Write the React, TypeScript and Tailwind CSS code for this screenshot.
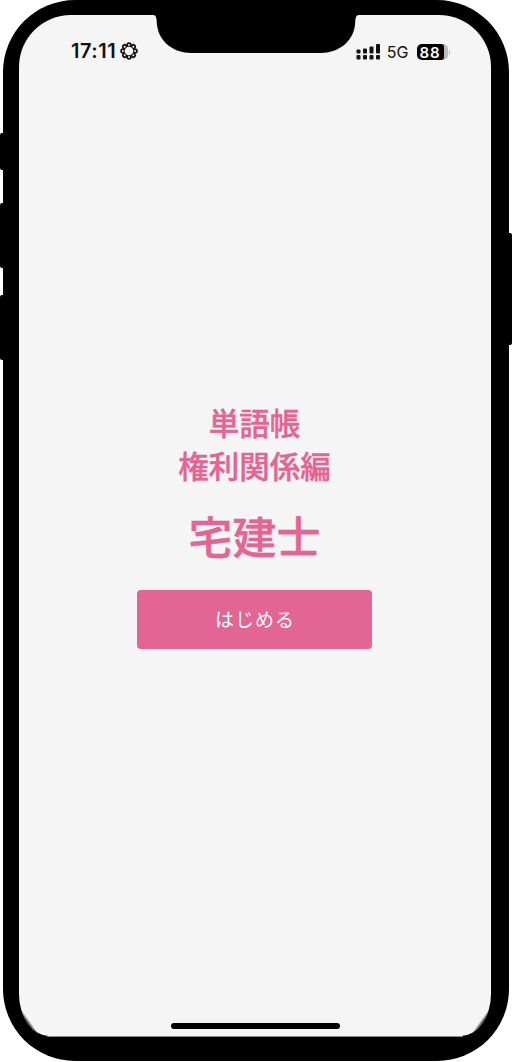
const pink = 'text-[#e26593]';
const heavy = '[-webkit-text-stroke:0.45px_#e26593]';

function RosetteIcon() {
  const angles = [0, 45, 90, 135, 180, 225, 270, 315];
  return (
    <svg width="18" height="18" viewBox="0 0 18 18" className="ml-[4px]">
      {angles.map((a) => (
        <circle key={a} cx="9" cy="2.900" r="2.700" fill="#111" transform={`rotate(${a} 9 9)`} />
      ))}
      {angles.map((a) => (
        <circle key={a} cx="9" cy="2.900" r="1" fill="#f5f5f5" transform={`rotate(${a} 9 9)`} />
      ))}
      <circle cx="9" cy="9" r="4.300" fill="#f5f5f5" />
    </svg>
  );
}

function SignalIcon() {
  return (
    <svg width="24" height="16" viewBox="0 0 24 16" fill="#111">
      <rect x="0.500" y="5.500" width="4" height="4" rx="1" />
      <rect x="0.500" y="11" width="4" height="4.500" rx="1" />
      <rect x="7" y="4.500" width="4" height="5" rx="1" />
      <rect x="7" y="11" width="4" height="4.500" rx="1" />
      <rect x="13.500" y="2.500" width="4" height="7" rx="1" />
      <rect x="13.500" y="11" width="4" height="4.500" rx="1" />
      <rect x="20" y="0" width="4" height="9.500" rx="1" />
      <rect x="20" y="11" width="4" height="4.500" rx="1" />
    </svg>
  );
}

function Battery() {
  return (
    <div className="ml-[8px] flex items-center">
      <div className="flex h-[16px] w-[31px] items-center overflow-hidden rounded-[5px] bg-[#bbb]">
        <div className="flex h-full w-[27px] items-center justify-center rounded-r-[3px] bg-black text-[15px] leading-none font-semibold tracking-[0.8px] text-white">
          88
        </div>
      </div>
      <div className="ml-[1px] h-[5px] w-[1.500px] rounded-r bg-[#bbb]" />
    </div>
  );
}

function Notch() {
  return (
    <svg
      width="220"
      height="54"
      viewBox="0 0 220 54"
      className="absolute top-0 left-[146px]"
    >
      <path d="M0 0H220V15H213C209 15 209.500 20 209 25C207 42 192 53 175 53H45C28 53 13 42 11 25C10.500 20 11 15 7 15H0Z" fill="#000" />
    </svg>
  );
}

export default function App() {
  return (
    <div className="relative h-[1062px] w-[512px] overflow-hidden bg-white font-['Noto_Sans_CJK_JP',sans-serif]">
      {/* side buttons */}
      <div className="absolute top-[133px] left-0 h-[37px] w-[4px] rounded-l-[2px] bg-black" />
      <div className="absolute top-[203px] left-0 h-[65px] w-[4px] rounded-l-[2px] bg-black" />
      <div className="absolute top-[295px] left-0 h-[65px] w-[4px] rounded-l-[2px] bg-black" />
      <div className="absolute top-[233px] right-0 h-[112px] w-[4px] rounded-r-[2px] bg-black" />

      <div className="mx-[3px] h-[1061px] rounded-[72px] bg-black pt-[15px] pr-[18px] pb-[25px] pl-[16px]">
        <div className="relative flex h-full flex-col rounded-t-[52px] rounded-bl-[30px_42px] rounded-br-[30px_42px] bg-[#f5f5f5]">
          <div className="flex h-[47px] shrink-0 items-end justify-between pr-[41px] pl-[52px]">
            <div className="flex items-center font-['Inter',sans-serif] text-[20px] leading-[22px] font-semibold tracking-[0.5px] text-[#111]">
              17:11
              <RosetteIcon />
            </div>
            <div className="flex items-center pb-[1px] font-['Inter',sans-serif]">
              <SignalIcon />
              <span className="ml-[7px] text-[16px] leading-[18px] text-[#111]">5G</span>
              <Battery />
            </div>
          </div>

          <div className="flex flex-1 flex-col items-center pt-[339px] pr-[1px]">
            <h2 className={`text-center text-[30.500px] leading-[43px] font-medium ${pink} ${heavy}`}>
              単語帳
              <br />
              権利関係編
            </h2>
            <h1 className={`mt-[18px] text-[44px] leading-[60px] font-medium ${pink} ${heavy}`}>宅建士</h1>
            <button className="mt-[25px] h-[59px] w-[235px] rounded-[4px] bg-[#e26593] pl-[1px] text-[19px] tracking-[1px] text-white">
              はじめる
            </button>
          </div>

          <div className="flex shrink-0 justify-center pb-[7px]">
            <div className="h-[6px] w-[169px] rounded-full bg-black" />
          </div>

          {/* corner shading and hairline along the bottom edge */}
          <div className="absolute bottom-0 left-0 h-[42px] w-[30px] rounded-bl-[30px_42px] bg-[linear-gradient(to_bottom_left,transparent_64%,#000_72%)]" />
          <div className="absolute right-0 bottom-0 h-[42px] w-[30px] rounded-br-[30px_42px] bg-[linear-gradient(to_bottom_right,transparent_64%,#000_72%)]" />
          <div className="absolute right-[28px] -bottom-[1px] left-[28px] h-[1px] bg-[#888]" />
        </div>
      </div>
      <Notch />
    </div>
  );
}
